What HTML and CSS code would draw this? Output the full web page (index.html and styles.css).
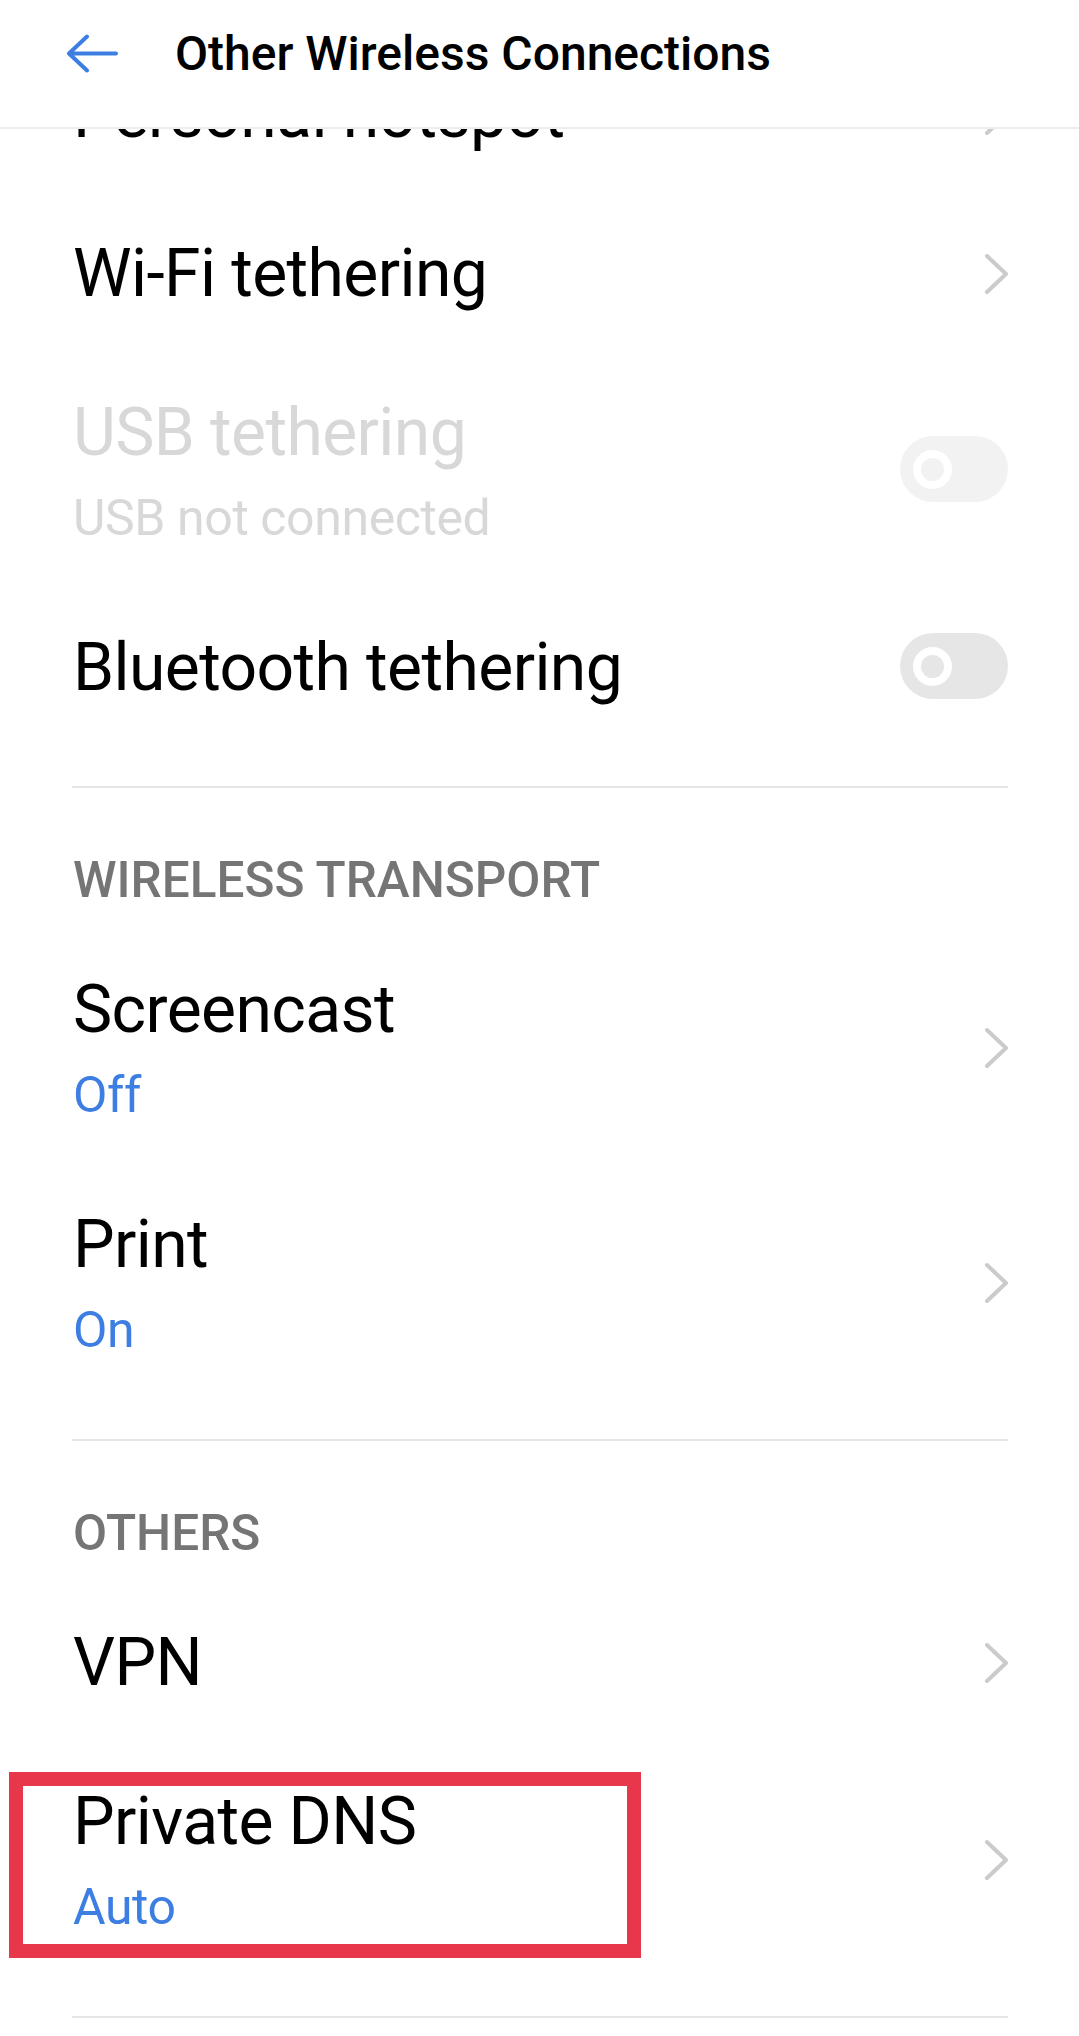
FILE: index.html
```html
<!DOCTYPE html>
<html lang="en">
<head>
    <meta charset="UTF-8">
    <meta name="viewport" content="width=device-width, initial-scale=1.0">
    <title>Other Wireless Connections</title>
    <link rel="stylesheet" href="styles.css">
</head>
<body>
    <div class="topbar">
        <svg class="back" width="52" height="40" viewBox="0 0 52 40">
            <path d="M3 19.5 H50 M21 2.5 L3 19.5 L21 36.5" fill="none" stroke="#3d7ee2" stroke-width="4" stroke-linecap="round" stroke-linejoin="round"/>
        </svg>
        <div class="topbar-title">Other Wireless Connections</div>
    </div>

    <div class="list">
        <div class="group">
            <div class="row">
                <div class="row-text">
                    <div class="row-title">Personal hotspot</div>
                </div>
                <svg class="chevron" width="36" height="44" viewBox="0 0 36 44"><path d="M15 4 L34 22 L15 40" /></svg>
            </div>
            <div class="row">
                <div class="row-text">
                    <div class="row-title">Wi-Fi tethering</div>
                </div>
                <svg class="chevron" width="36" height="44" viewBox="0 0 36 44"><path d="M15 4 L34 22 L15 40" /></svg>
            </div>
            <div class="row disabled">
                <div class="row-text">
                    <div class="row-title">USB tethering</div>
                    <div class="row-sub">USB not connected</div>
                </div>
                <div class="toggle"><span class="knob"></span></div>
            </div>
            <div class="row">
                <div class="row-text">
                    <div class="row-title">Bluetooth tethering</div>
                </div>
                <div class="toggle"><span class="knob"></span></div>
            </div>
        </div>

        <div class="group">
            <div class="group-title">WIRELESS TRANSPORT</div>
            <div class="row">
                <div class="row-text">
                    <div class="row-title">Screencast</div>
                    <div class="row-sub blue">Off</div>
                </div>
                <svg class="chevron" width="36" height="44" viewBox="0 0 36 44"><path d="M15 4 L34 22 L15 40" /></svg>
            </div>
            <div class="row">
                <div class="row-text">
                    <div class="row-title">Print</div>
                    <div class="row-sub blue">On</div>
                </div>
                <svg class="chevron" width="36" height="44" viewBox="0 0 36 44"><path d="M15 4 L34 22 L15 40" /></svg>
            </div>
        </div>

        <div class="group">
            <div class="group-title">OTHERS</div>
            <div class="row">
                <div class="row-text">
                    <div class="row-title">VPN</div>
                </div>
                <svg class="chevron" width="36" height="44" viewBox="0 0 36 44"><path d="M15 4 L34 22 L15 40" /></svg>
            </div>
            <div class="row marked">
                <div class="row-text">
                    <div class="row-title">Private DNS</div>
                    <div class="row-sub blue">Auto</div>
                </div>
                <svg class="chevron" width="36" height="44" viewBox="0 0 36 44"><path d="M15 4 L34 22 L15 40" /></svg>
                <div class="highlight"></div>
            </div>
        </div>
    </div>
</body>
</html>
```

FILE: styles.css
```css
body {
    margin: 0;
    background-color: #fff;
    font-family: Roboto, "Noto Sans", Arial, sans-serif;
    color: #000;
    overflow: hidden;
}
.topbar {
    position: fixed;
    top: 0;
    left: 0;
    right: 0;
    height: 129px;
    box-sizing: border-box;
    padding-top: 25px;
    display: flex;
    align-items: flex-start;
    background-color: #fff;
    border-bottom: 2px solid #ededed;
    z-index: 2;
}
.back {
    margin: 9px 0 0 66px;
    flex-shrink: 0;
}
.topbar-title {
    margin-left: 57px;
    font-size: 48px;
    line-height: 58px;
    font-weight: 500;
}
.list {
    padding-top: 34px;
}
.group {
    margin: 0 71px 0 72px;
    padding-bottom: 40px;
    border-bottom: 2px solid #e6e6e6;
}
.group-title {
    padding: 63px 0 20px 1px;
    font-size: 49.5px;
    line-height: 58px;
    font-weight: 500;
    color: #757575;
}
.row {
    position: relative;
    display: flex;
    align-items: center;
    justify-content: space-between;
    padding: 43px 0 40px 1px;
}
.row-title {
    font-size: 66px;
    line-height: 76px;
    letter-spacing: -0.6px;
}
.row-sub {
    margin-top: 18px;
    font-size: 50px;
    line-height: 58px;
    letter-spacing: -0.4px;
}
.blue {
    color: #3d7ee2;
}
.disabled .row-title,
.disabled .row-sub {
    color: #d8d8d8;
}
.chevron {
    flex-shrink: 0;
}
.chevron path {
    fill: none;
    stroke: #cbcbcb;
    stroke-width: 4;
    stroke-linecap: round;
    stroke-linejoin: round;
}
.toggle {
    width: 108px;
    height: 66px;
    margin-bottom: 4px;
    border-radius: 33px;
    background-color: #e6e6e6;
    display: flex;
    align-items: center;
    padding-left: 13px;
    box-sizing: border-box;
}
.disabled .toggle {
    background-color: #f2f2f2;
}
.knob {
    width: 39px;
    height: 39px;
    border: 8px solid #fff;
    border-radius: 50%;
    box-sizing: border-box;
}
.highlight {
    position: absolute;
    left: -63px;
    top: 31px;
    width: 632px;
    height: 186px;
    border: 14px solid #e8364a;
    box-sizing: border-box;
}
```
